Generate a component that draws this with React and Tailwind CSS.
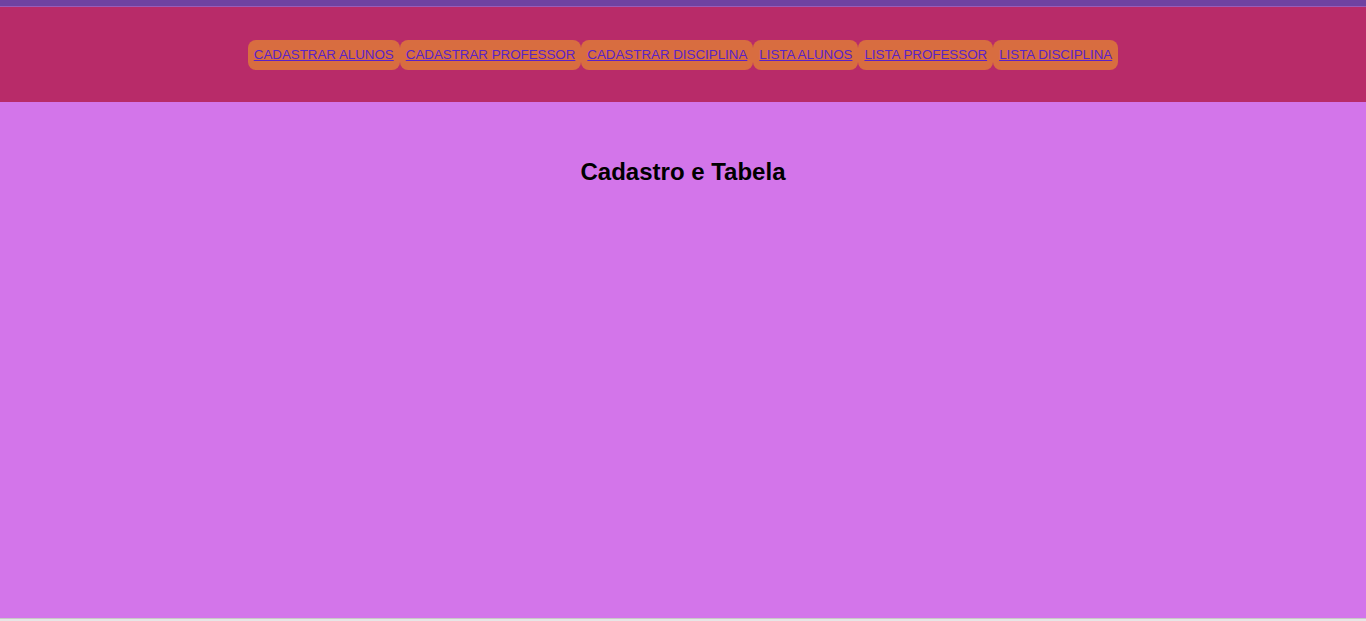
const LINKS = [
  'CADASTRAR ALUNOS',
  'CADASTRAR PROFESSOR',
  'CADASTRAR DISCIPLINA',
  'LISTA ALUNOS',
  'LISTA PROFESSOR',
  'LISTA DISCIPLINA',
];

export default function App() {
  return (
    <div className="flex flex-col h-[621px] bg-[#e6e6e6] font-['Liberation_Sans',Arial,sans-serif]">
      <div className="h-[6px] bg-[#6f42a1]" />
      <div className="h-px bg-[#9a5bb8]" />
      <header className="h-[95px] bg-[#b82b69] flex items-center justify-center">
        <nav className="flex">
          {LINKS.map(l => (
            <a
              key={l}
              href="#"
              className="bg-[#d86d40] rounded-[8px] h-[30px] px-[6px] flex items-center text-[13.333px] text-[#5a22c8] underline"
            >
              {l}
            </a>
          ))}
        </nav>
      </header>
      <main className="h-[516px] bg-[#d375ea] flex justify-center">
        <h2 className="mt-[56px] text-[24px] leading-[28px] font-bold text-black h-fit">Cadastro e Tabela</h2>
      </main>
      <div className="h-px bg-[#c8c8c8]" />
    </div>
  );
}
